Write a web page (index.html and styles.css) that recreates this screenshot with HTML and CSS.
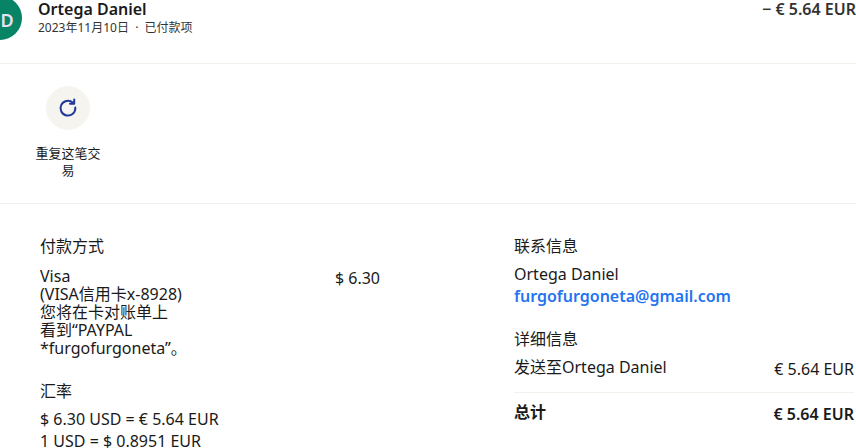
FILE: index.html
```html
<!DOCTYPE html>
<html lang="zh-CN">
<head>
  <meta charset="UTF-8">
  <meta name="viewport" content="width=device-width, initial-scale=1.0">
  <title>Ortega Daniel</title>
  <link rel="stylesheet" href="styles.css">
</head>
<body>
  <header class="summary">
    <div class="avatar">OD</div>
    <div class="summary-info">
      <h1>Ortega Daniel</h1>
      <p>2023年11月10日 &nbsp;·&nbsp; 已付款项</p>
    </div>
    <div class="summary-amount">− € 5.64 EUR</div>
  </header>

  <section class="actions">
    <button type="button" class="action">
      <span class="action-icon">
        <svg width="20" height="20" viewBox="0 0 20 20" fill="none" stroke="currentColor" stroke-width="2" stroke-linecap="round" stroke-linejoin="round">
          <path d="M17.3 9.6A7.4 7.4 0 1 1 14.8 4.6"/>
          <path d="M16.2 1.6v4.2h-4.2"/>
        </svg>
      </span>
      <span>重复这笔交易</span>
    </button>
  </section>

  <main class="details">
    <div class="column">
      <section class="block">
        <h2>付款方式</h2>
        <div class="row">
          <p class="source">Visa<br>(VISA信用卡x-8928)<br>您将在卡对账单上<br>看到“PAYPAL<br>*furgofurgoneta”。</p>
          <span class="source-amount">$ 6.30</span>
        </div>
      </section>
      <section class="block">
        <h2>汇率</h2>
        <p>$ 6.30 USD = € 5.64 EUR</p>
        <p>1 USD = $ 0.8951 EUR</p>
      </section>
    </div>

    <div class="column">
      <section class="block">
        <h2>联系信息</h2>
        <p>Ortega Daniel</p>
        <p><a href="mailto:furgofurgoneta@gmail.com">furgofurgoneta@gmail.com</a></p>
      </section>
      <section class="block">
        <h2>详细信息</h2>
        <div class="row">
          <span>发送至Ortega Daniel</span>
          <span class="amount">€ 5.64 EUR</span>
        </div>
        <div class="row total">
          <span>总计</span>
          <span class="amount">€ 5.64 EUR</span>
        </div>
      </section>
    </div>
  </main>
</body>
</html>
```
FILE: styles.css
```css
:root {
  --text: #1a1a1a;
  --line: #f1f1ec;
  --link: #1f74f0;
  --icon: #23389a;
}

* {
  margin: 0;
  padding: 0;
  box-sizing: border-box;
}

body {
  font-family: "Noto Sans", "Noto Sans CJK SC", sans-serif;
  font-size: 16px;
  line-height: 22px;
  color: var(--text);
  background-color: white;
  overflow: hidden;
}

.summary {
  display: flex;
  height: 64px;
  border-bottom: 1px solid var(--line);
}

.avatar {
  flex: none;
  width: 44px;
  height: 44px;
  margin: -4px 16px 0 -22px;
  border-radius: 50%;
  background-color: #078466;
  color: #e6e0f5;
  font-size: 18px;
  font-weight: 600;
  line-height: 48px;
  text-align: center;
}

.summary-info {
  flex: 1;
}

h1 {
  font-size: 16px;
  line-height: 18px;
  font-weight: 600;
}

.summary-info p {
  font-size: 12px;
  line-height: 20px;
  color: #333;
}

.summary-amount {
  line-height: 18px;
  font-weight: 600;
  color: #333;
}

.actions {
  padding: 22px 32px 24px;
  border-bottom: 1px solid var(--line);
}

.action {
  display: flex;
  flex-direction: column;
  align-items: center;
  gap: 15px;
  width: 72px;
  border: none;
  background: none;
  font: inherit;
  font-size: 13px;
  line-height: 17px;
  color: var(--text);
  cursor: pointer;
}

.action-icon {
  display: flex;
  align-items: center;
  justify-content: center;
  width: 44px;
  height: 44px;
  border-radius: 50%;
  background-color: #f5f4ef;
  color: var(--icon);
}

.details {
  display: grid;
  grid-template-columns: 1fr 1fr;
  gap: 134px;
  padding: 31px 2px 0 40px;
}

.block {
  margin-bottom: 21px;
}

.block:last-child {
  margin-bottom: 0;
}

h2 {
  font-size: 16px;
  line-height: 22px;
  font-weight: 400;
  margin-bottom: 6px;
}

.row {
  display: flex;
  justify-content: space-between;
}

.source {
  padding: 4px 0 2px;
  line-height: 18px;
}

.source-amount {
  padding-top: 4px;
}

.amount {
  padding-top: 2px;
}

.total {
  margin-top: 12px;
  padding-top: 8px;
  border-top: 1px solid var(--line);
  font-weight: 600;
}

a {
  color: var(--link);
  font-weight: 600;
  text-decoration: none;
}
```
